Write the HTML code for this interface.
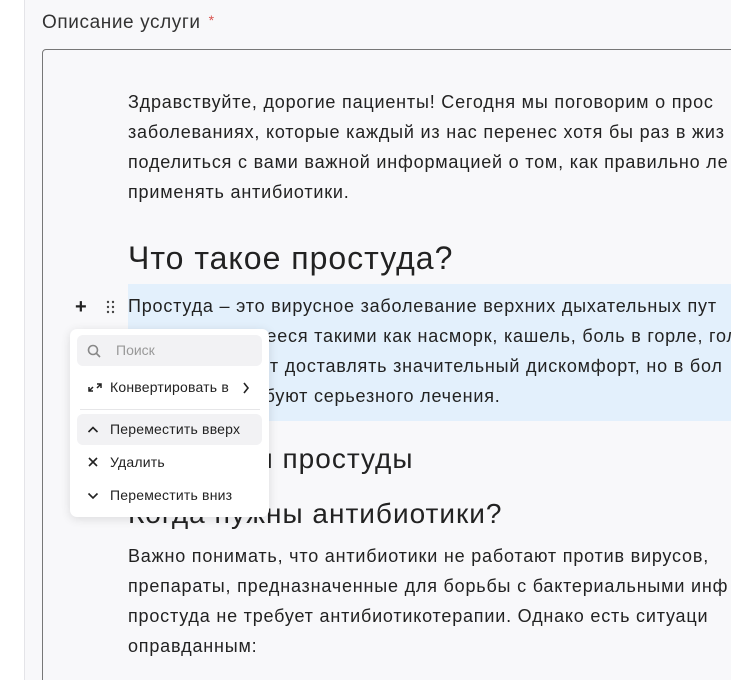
<!DOCTYPE html>
<html style="overflow:hidden;height:680px"><head><meta charset="utf-8"><style>
*{margin:0;padding:0;box-sizing:border-box}
body{width:731px;height:680px;overflow:hidden;background:#f8f8fa;font-family:"Liberation Sans",sans-serif;color:#222;position:relative}
.wrap{position:absolute;left:0;top:0;width:731px;height:680px;overflow:hidden}
.side{position:absolute;left:0;top:0;width:25px;height:680px;background:#fff;border-right:1px solid #e4e4e8}
.label{position:absolute;left:42px;top:12px;font-size:19px;letter-spacing:0.6px;color:#333}
.label span{color:#d9534f;font-size:14px;margin-left:8px;vertical-align:top}
.box{position:absolute;left:42px;top:49px;width:720px;height:660px;border:1px solid #777;border-radius:4px;background:#f8f8fa}
.t{position:absolute;left:128px;white-space:nowrap;font-size:18px;letter-spacing:0.8px;color:#222}
.h{position:absolute;left:128px;white-space:nowrap;color:#222;letter-spacing:1px}
.hl{position:absolute;left:128px;top:284px;width:603px;height:137px;background:#e3f0fc}
.menu{position:absolute;left:70px;top:329px;width:199px;height:188px;background:#fff;border-radius:7px;box-shadow:0 2px 10px rgba(0,0,0,.12)}
.search{position:absolute;left:7px;top:6px;width:185px;height:31px;background:#f2f2f4;border-radius:6px;font-size:14px;color:#999}
.item{position:absolute;left:7px;width:185px;height:31px;border-radius:6px;font-size:14px;letter-spacing:0.2px;color:#222;line-height:31px;padding-left:33px}
.ic{position:absolute;left:10px;top:0}
</style></head><body><div class="wrap">
<div class="side"></div>
<div class="label">Описание услуги<span>*</span></div>
<div class="box"></div>
<div class="hl"></div>
<div class="t" style="top:92px">Здравствуйте, дорогие пациенты! Сегодня мы поговорим о прос</div>
<div class="t" style="top:122px">заболеваниях, которые каждый из нас перенес хотя бы раз в жиз</div>
<div class="t" style="top:152px">поделиться с вами важной информацией о том, как правильно ле</div>
<div class="t" style="top:182px">применять антибиотики.</div>
<div class="h" style="top:240px;font-size:32px">Что такое простуда?</div>
<div class="t" style="top:296px">Простуда – это вирусное заболевание верхних дыхательных пут</div>
<div class="t" style="top:326px">сопровождающееся такими как насморк, кашель, боль в горле, головна</div>
<div class="t" style="top:356px">Симптомы могут доставлять значительный дискомфорт, но в бол</div>
<div class="t" style="top:386px">случаев не требуют серьезного лечения.</div>
<div class="h" style="top:443px;font-size:28px">Симптомы простуды</div>
<div class="h" style="top:498px;font-size:28px">Когда нужны антибиотики?</div>
<div class="t" style="top:546px">Важно понимать, что антибиотики не работают против вирусов,</div>
<div class="t" style="top:576px">препараты, предназначенные для борьбы с бактериальными инф</div>
<div class="t" style="top:606px">простуда не требует антибиотикотерапии. Однако есть ситуаци</div>
<div class="t" style="top:636px">оправданным:</div>
<div style="position:absolute;left:75px;top:296px;font-size:20px;font-weight:bold;color:#222">+</div>
<svg style="position:absolute;left:106px;top:300px" width="10" height="14"><g fill="#444"><circle cx="2" cy="2" r="1.2"/><circle cx="7" cy="2" r="1.2"/><circle cx="2" cy="7" r="1.2"/><circle cx="7" cy="7" r="1.2"/><circle cx="2" cy="12" r="1.2"/><circle cx="7" cy="12" r="1.2"/></g></svg>
<div class="menu">
 <div class="search"><svg style="position:absolute;left:10px;top:9px" width="14" height="14"><circle cx="6" cy="6" r="4.5" stroke="#888" stroke-width="1.6" fill="none"/><path d="M9.5 9.5L13 13" stroke="#888" stroke-width="1.6"/></svg><span style="position:absolute;left:39px;top:7px">Поиск</span></div>
 <div class="item" style="top:43px"><svg class="ic" width="16" height="31"><path d="M2 19L6 15M2 15v4h4M14 12l-4 4M14 16v-4h-4" stroke="#222" stroke-width="1.5" fill="none"/></svg>Конвертировать в<svg style="position:absolute;left:165px;top:10px" width="8" height="12"><path d="M2 1l4 5-4 5" stroke="#222" stroke-width="1.6" fill="none"/></svg></div>
 <div style="position:absolute;left:10px;top:80px;width:180px;height:1px;background:#e6e6e8"></div>
 <div class="item" style="top:85px;background:#f2f2f4"><svg class="ic" width="12" height="31"><path d="M1.5 18l4.5-4.5 4.5 4.5" stroke="#222" stroke-width="1.6" fill="none"/></svg>Переместить вверх</div>
 <div class="item" style="top:118px"><svg class="ic" width="12" height="31"><path d="M2 11l8 8M10 11l-8 8" stroke="#222" stroke-width="1.6"/></svg>Удалить</div>
 <div class="item" style="top:151px"><svg class="ic" width="12" height="31"><path d="M1.5 13.5l4.5 4.5 4.5-4.5" stroke="#222" stroke-width="1.6" fill="none"/></svg>Переместить вниз</div>
</div>
</div></body></html>
